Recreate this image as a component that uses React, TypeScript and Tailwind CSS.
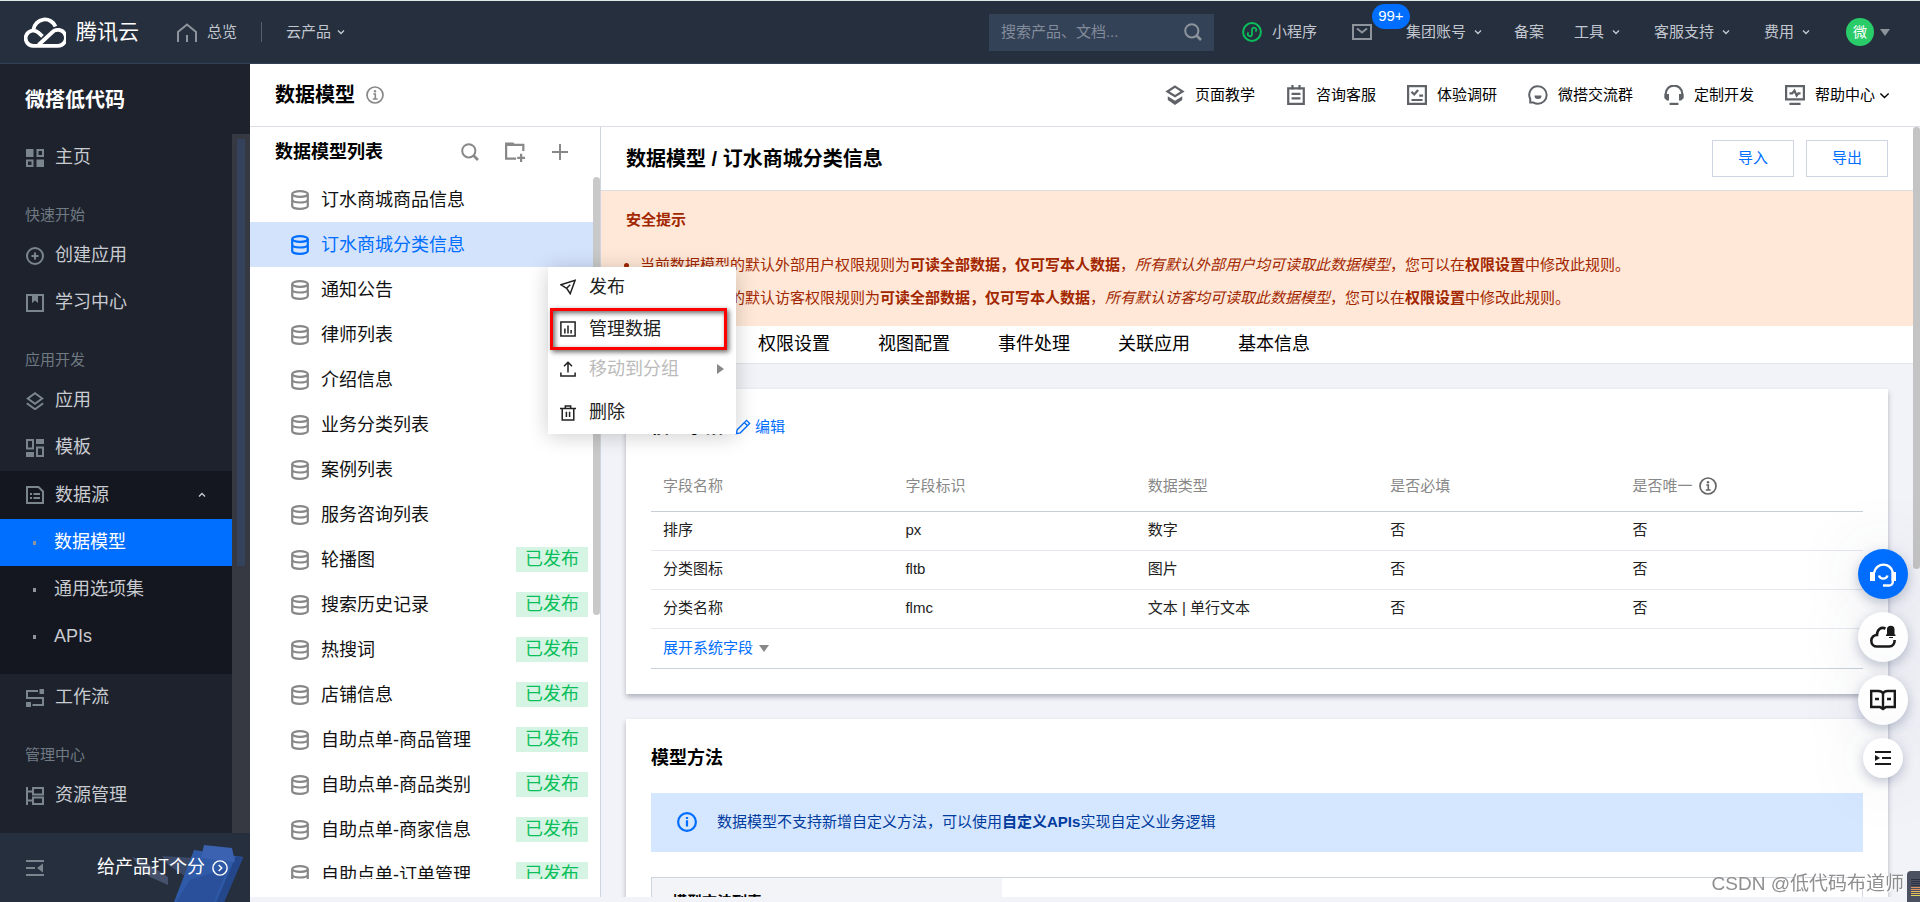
import type { ReactNode } from "react";
import clsx from "clsx";

const FONT = "font-['Liberation_Sans','Noto_Sans_CJK_SC',sans-serif]";

function Icon({ children, size = 18, className = "" }: { children: ReactNode; size?: number; className?: string }) {
  return (
    <svg
      width={size}
      height={size}
      viewBox="0 0 18 18"
      fill="none"
      stroke="currentColor"
      strokeWidth="2"
      className={clsx("shrink-0", className)}
      aria-hidden="true"
    >
      {children}
    </svg>
  );
}

const icons = {
  grid: (
    <>
      <path d="M0 0h7.500v8H0zM10.500 10.500H18V18h-7.500z" fill="currentColor" stroke="none" />
      <path d="M11.500 1H17v6h-5.500zM1 11.500h5.500V17H1z" />
    </>
  ),
  plusCircle: (
    <>
      <circle cx="9" cy="9" r="8" />
      <path d="M9 5.500v7M5.500 9h7" />
    </>
  ),
  book: (
    <>
      <path d="M1 1h16v16H1z" />
      <path d="M6 2h6v7L9 6.500 6 9z" fill="currentColor" stroke="none" />
    </>
  ),
  layers: (
    <>
      <path d="M9 1.200 16.200 6.500 9 11.800 1.800 6.500z" />
      <path d="m.8 11.200 8.200 6 8.200-6" />
    </>
  ),
  template: (
    <>
      <path d="M1 1h6v8.500H1zM11 8.500h6V17h-6z" />
      <path d="M0 13h8v5H0zM10 0h8v5h-8z" fill="currentColor" stroke="none" />
    </>
  ),
  source: (
    <>
      <path d="M1 1h11.500L17 5.500V17H1z" />
      <path d="M4 8h2M7.500 8H14M4 12h2M7.500 12H14" />
    </>
  ),
  flow: (
    <>
      <path d="M12 2H1v7h16v7H6.500" />
      <path d="M13.500 0H18v5h-4.500zM0 13h5v5H0z" fill="currentColor" stroke="none" />
    </>
  ),
  resource: (
    <>
      <path d="M1 0v18M1 4.500h5M1 13.500h5" />
      <path d="M7 1h10v6.500H7zM7 10.500h10V17H7z" />
    </>
  ),
  search: (
    <>
      <circle cx="7.800" cy="7.800" r="6.600" />
      <path d="m12.500 12.500 4.500 4.500" strokeWidth="2.600" />
    </>
  ),
  info: (
    <>
      <circle cx="9" cy="9" r="8" strokeWidth="1.700" />
      <path d="M7.300 8h2v5M6.800 13h4.800" strokeWidth="1.600" />
      <circle cx="9" cy="5.200" r="1.200" fill="currentColor" stroke="none" />
    </>
  ),
};

function DbIcon({ className = "" }: { className?: string }) {
  return (
    <svg width="18" height="20" viewBox="0 0 18 20" fill="none" stroke="currentColor" strokeWidth="2.200" className={clsx("shrink-0", className)} aria-hidden="true">
      <ellipse cx="9" cy="4" rx="7.800" ry="2.900" />
      <path d="M1.200 4v12c0 1.700 3.500 2.900 7.800 2.900s7.800-1.200 7.800-2.900V4M1.200 9.500c0 1.900 3.500 3 7.800 3s7.800-1.100 7.800-3" />
    </svg>
  );
}

function Chevron({ size = 8, up = false }: { size?: number; up?: boolean }) {
  return (
    <svg width={size} height={size} viewBox="0 0 8 8" fill="none" stroke="currentColor" strokeWidth={size > 8 ? 1 : 1.4} aria-hidden="true">
      <path d={up ? "M1 5.500 4 2.500l3 3" : "M1 2.500l3 3 3-3"} />
    </svg>
  );
}

function TopBar() {
  return (
    <header className="flex h-16 shrink-0 items-center border-t border-b border-t-[#dfe6e6] border-b-[#33405a] bg-[#262f3e] pl-6 pr-[30px] text-[15px] text-[#c2c7cf]">
      <a href="#" className="flex items-center gap-2.5 text-white">
        <svg width="42" height="31" viewBox="0 0 42 31" fill="none" stroke="#fff" strokeWidth="3.800" aria-hidden="true">
          <path d="M9.500 12.500A11.500 11.500 0 0 1 31.500 9.500" />
          <path d="M14.500 28 27.500 16a8 8 0 1 1 5.500 12.800H9.500a7.600 7.600 0 1 1 5.200-12.900l3.800 3.500" />
        </svg>
        <span className="text-[21px]">腾讯云</span>
      </a>
      <a href="#" className="ml-[38px] flex items-center gap-2.5">
        <svg width="20" height="19" viewBox="0 0 20 19" fill="none" stroke="#8d949c" strokeWidth="2" aria-hidden="true">
          <path d="M1 19V9l9-7.500L19 9v10M10 19v-7" />
        </svg>
        总览
      </a>
      <span className="mx-6 h-5 w-px bg-[#566070]" />
      <button className="flex items-center gap-1.5">
        云产品 <Chevron />
      </button>

      <div className="ml-auto flex items-center">
        <label className="mr-7 flex h-[37px] w-[225px] items-center justify-between bg-[#344258] pl-3 pr-3">
          <input type="text" placeholder="搜索产品、文档..." aria-label="搜索" className="w-40 bg-transparent outline-none placeholder:text-[#838c9a]" />
          <Icon className="text-[#8d949c]">{icons.search}</Icon>
        </label>
        <a href="#" className="mr-[35px] flex items-center gap-2.5">
          <Icon size={20} className="text-[#0abf5b]">
            <circle cx="9" cy="9" r="8" strokeWidth="1.800" />
            <path d="M5.900 9.400c-3 2.800 3.100 5.200 3.100 1.600V7c0-3.600 6.100-1.200 3.100 1.600" strokeWidth="1.600" />
          </Icon>
          小程序
        </a>
        <button className="relative mr-[34px]" aria-label="消息">
          <svg width="20" height="16" viewBox="0 0 20 16" fill="none" stroke="#8d949c" strokeWidth="2" aria-hidden="true">
            <path d="M1 1h18v14H1zM5 4.500l5 4 5-4" />
          </svg>
          <span className="absolute -top-5 left-5 flex h-[25px] w-[38px] items-center justify-center rounded-full bg-[#006eff] text-[15px] text-white">99+</span>
        </button>
        <button className="mr-8 flex items-center gap-2">
          集团账号 <Chevron />
        </button>
        <button className="mr-[30px]">备案</button>
        <button className="mr-[34px] flex items-center gap-2">
          工具 <Chevron />
        </button>
        <button className="mr-[34px] flex items-center gap-2">
          客服支持 <Chevron />
        </button>
        <button className="mr-9 flex items-center gap-2">
          费用 <Chevron />
        </button>
        <button className="flex items-center gap-1.5">
          <span className="flex size-7 items-center justify-center rounded-full bg-[#29cc68] text-sm text-white">微</span>
          <svg width="10" height="7" viewBox="0 0 10 7" aria-hidden="true">
            <path d="M0 0h10L5 7z" fill="#8d949c" />
          </svg>
        </button>
      </div>
    </header>
  );
}

function NavItem({ icon, label }: { icon: ReactNode; label: string }) {
  return (
    <a href="#" className="flex h-[47px] items-center gap-[11px] pl-[26px] text-[18px] text-[#c8cbd0]">
      <Icon className="text-[#7b858e]">{icon}</Icon>
      {label}
    </a>
  );
}

function NavLabel({ children }: { children: ReactNode }) {
  return <div className="h-[51px] pt-[22px] pl-[25px] text-[15px] leading-6 text-[#6f7a83]">{children}</div>;
}

function SubItem({ label, active = false }: { label: string; active?: boolean }) {
  return (
    <a
      href="#"
      className={clsx("flex h-[47px] items-center gap-[18px] pl-[33px] text-[18px]", active ? "bg-[#006eff] text-white" : "text-[#c8cbd0]")}
    >
      <span className="h-1 w-[3px] bg-[#8d949c]" />
      {label}
    </a>
  );
}

function Sidebar() {
  return (
    <nav className="flex w-[250px] shrink-0 flex-col overflow-hidden bg-[#1e222d]">
      <h1 className="h-[70px] shrink-0 pt-[22px] pl-[25px] text-[20px] font-bold leading-7 text-white">微搭低代码</h1>
      <div className="flex min-h-0 flex-1">
        <div className="min-w-0 flex-1 overflow-hidden">
          <NavItem icon={icons.grid} label="主页" />
          <NavLabel>快速开始</NavLabel>
          <NavItem icon={icons.plusCircle} label="创建应用" />
          <NavItem icon={icons.book} label="学习中心" />
          <NavLabel>应用开发</NavLabel>
          <NavItem icon={icons.layers} label="应用" />
          <NavItem icon={icons.template} label="模板" />
          <div className="bg-[#151720] pb-3.5">
            <div className="flex h-12 items-center justify-between pr-[26px] text-[#c8cbd0]">
              <NavItem icon={icons.source} label="数据源" />
              <Chevron up />
            </div>
            <SubItem label="数据模型" active />
            <SubItem label="通用选项集" />
            <SubItem label="APIs" />
          </div>
          <NavItem icon={icons.flow} label="工作流" />
          <NavLabel>管理中心</NavLabel>
          <NavItem icon={icons.resource} label="资源管理" />
          <NavItem icon={<path d="M0 1h18v16H0z" />} label="" />
        </div>
        <div className="w-[18px] bg-[#363941] py-[5px] pl-[5px]">
          <div className="h-[427px] w-2 bg-[#35425c]" />
        </div>
      </div>
      <div className="relative flex h-[69px] shrink-0 items-center justify-between bg-[#262f3e] pl-[26px] pr-[22px]">
        <svg width="120" height="58" viewBox="0 0 120 58" className="absolute right-0 bottom-0" aria-hidden="true">
          <path d="M2 13l10 3 26 17v8L20 33z" fill="#46526b" />
          <path d="M32 12l34 2-8 20-20-13z" fill="#3c4a69" />
          <path d="M64 6l49 7-19 45H44z" fill="#2f5aa8" />
          <path d="M106 12l7 2-19 44h-8z" fill="#24478c" />
          <path d="M60 36l38-12-14 34H46z" fill="#2a509b" />
          <path d="M74 1l28 3 3 14-34-4z" fill="#3b62b0" />
        </svg>
        <button aria-label="收起" className="text-[#7b858e]">
          <Icon>
            <path d="M0 2h18M0 9h9M0 16h18" />
            <path d="M17 4.500v9L11 9z" fill="currentColor" stroke="none" />
          </Icon>
        </button>
        <button className="relative flex items-center gap-[7px] text-[18px] text-white">
          给产品打个分
          <Icon size={16}>
            <circle cx="9" cy="9" r="8" strokeWidth="1.600" />
            <path d="M7.500 5.500 11 9l-3.500 3.500" strokeWidth="1.600" />
          </Icon>
        </button>
      </div>
    </nav>
  );
}

const helpLinks = [
  {
    label: "页面教学",
    icon: (
      <>
        <path d="M9 1.500 15.800 5.800 9 10.100 2.200 5.800z" />
        <path d="M2.500 10.200 9 14.200l6.500-4v3.300L9 18l-6.500-4.500z" fill="currentColor" stroke="none" />
      </>
    ),
  },
  {
    label: "咨询客服",
    icon: (
      <>
        <path d="M2 3h14v14H2z" />
        <path d="M5.800 0v4M12.200 0v4M5 8h8M5 12h8" />
      </>
    ),
  },
  {
    label: "体验调研",
    icon: (
      <>
        <path d="M1 1h16v16H1zM4 13.500h10" />
        <path d="m4 6 2.500 2.500L10 4.500M11 9.500h3.500" />
      </>
    ),
  },
  {
    label: "微搭交流群",
    icon: (
      <>
        <path d="M9 1.200a7.600 7.600 0 1 1 0 15.600c-2 0-3-.4-4-1H2v-3.500A7.600 7.600 0 0 1 9 1.200z" strokeWidth="1.800" />
        <path d="M5.800 9.500h6.400a3.200 3.200 0 0 1-6.400 0z" fill="currentColor" stroke="none" />
      </>
    ),
  },
  {
    label: "定制开发",
    icon: (
      <>
        <path d="M1.500 12V8a7.500 7.500 0 0 1 15 0v4" />
        <path d="M.5 8h4v6h-2l-2-2zM17.500 8h-4v6h2l2-2z" fill="currentColor" stroke="none" />
        <path d="M5 17h8" />
      </>
    ),
  },
  {
    label: "帮助中心",
    icon: (
      <>
        <path d="M1 1h16v12H1zM4 17h10" />
        <path d="M4 7.500h2.500l2-2.500 2 4.500 1.500-2h2" />
      </>
    ),
  },
];

function PageHeader() {
  return (
    <div className="flex h-[63px] shrink-0 items-center border-b border-[#dcdfe3] bg-white pl-[25px] pr-[30px]">
      <h2 className="text-[20px] font-bold">数据模型</h2>
      <button aria-label="说明" className="ml-[11px] text-[#888]">
        <Icon>{icons.info}</Icon>
      </button>
      <div className="ml-auto flex items-center gap-[31px] text-[15px]">
        {helpLinks.map((link, i) => (
          <a key={link.label} href="#" className="flex items-center gap-2.5">
            <Icon size={20} className="text-[#5f6368]">
              {link.icon}
            </Icon>
            <span className="flex items-center gap-1">
              {link.label}
              {i === helpLinks.length - 1 && <Chevron size={11} />}
            </span>
          </a>
        ))}
      </div>
    </div>
  );
}

const models = [
  { name: "订水商城商品信息" },
  { name: "订水商城分类信息", active: true },
  { name: "通知公告" },
  { name: "律师列表" },
  { name: "介绍信息" },
  { name: "业务分类列表" },
  { name: "案例列表" },
  { name: "服务咨询列表" },
  { name: "轮播图", published: true },
  { name: "搜索历史记录", published: true },
  { name: "热搜词", published: true },
  { name: "店铺信息", published: true },
  { name: "自助点单-商品管理", published: true },
  { name: "自助点单-商品类别", published: true },
  { name: "自助点单-商家信息", published: true },
  { name: "自助点单-订单管理", published: true },
];

function ContextMenu() {
  const item = "flex w-full items-center gap-[13px] pl-3 text-left text-[18px]";
  return (
    <div className="absolute top-[140px] left-[298px] z-20 w-[188px] bg-white text-[#222] shadow-[0_2px_20px_rgba(0,0,0,0.2)]">
      <button className={clsx(item, "h-10")}>
        <Icon size={16}>
          <path d="M1 6.500 17 1.500 11.500 16.500 7.500 10.500zM7.500 10.500l4-4" strokeWidth="1.700" />
        </Icon>
        发布
      </button>
      <div className="relative">
        <button className={clsx(item, "h-11")}>
          <Icon size={16}>
            <path d="M1 1h16v16H1zM5.500 8.500V14M9 5v9M12.500 10v4" strokeWidth="1.700" />
          </Icon>
          管理数据
        </button>
        <span className="pointer-events-none absolute inset-x-0.5 inset-y-px mr-[7px] border-3 border-[#f00] shadow-[2px_2px_5px_rgba(0,0,0,0.6),inset_2px_2px_5px_rgba(0,0,0,0.6)]" />
      </div>
      <button className={clsx(item, "h-9 text-[#bbb]")} disabled>
        <Icon size={16} className="text-[#222]">
          <path d="M9 13V1.500M4.500 6 9 1.500 13.500 6M1 13v4h16v-4" strokeWidth="1.700" />
        </Icon>
        移动到分组
        <svg width="7" height="10" viewBox="0 0 7 10" className="ml-auto mr-3" aria-hidden="true">
          <path d="M0 0v10l7-5z" fill="#888" />
        </svg>
      </button>
      <button className={clsx(item, "h-[47px] pt-1")}>
        <Icon size={16}>
          <path d="M0 4h18M2.500 4v13h13V4M6 4V1h6v3M7.200 7.500v6M10.800 7.500v6" strokeWidth="1.700" />
        </Icon>
        删除
      </button>
    </div>
  );
}

function ModelList() {
  return (
    <aside className="relative mb-[5px] flex w-[351px] shrink-0 flex-col border-r border-[#cfd5de] bg-white pb-[18px]">
      <div className="flex h-[50px] shrink-0 items-center pl-[25px] pr-[31px] text-[#888]">
        <h3 className="mr-auto text-[18px] font-bold text-black">数据模型列表</h3>
        <button aria-label="搜索模型">
          <Icon>{icons.search}</Icon>
        </button>
        <button aria-label="新建分组" className="ml-[26px]">
          <Icon size={20}>
            <path d="M10 15H1V2.500h15.500V8" />
            <path d="M0 .5h7.500l2 2.500H0z" fill="currentColor" stroke="none" />
            <path d="M14.500 10.500V18M11 14.200h7" />
          </Icon>
        </button>
        <button aria-label="新建模型" className="ml-[26px]">
          <Icon>
            <path d="M9 1v16M1 9h16" />
          </Icon>
        </button>
      </div>
      <div className="flex min-h-0 flex-1">
        <ul className="min-w-0 flex-1 overflow-hidden text-[18px]">
          {models.map((m) => (
            <li key={m.name}>
              <a
                href="#"
                className={clsx("flex h-[45px] items-center pl-[41px] pr-[5px]", m.active ? "bg-[#d4e3fc] text-[#006eff]" : "text-[#111]")}
              >
                <DbIcon className={clsx("mr-3", !m.active && "text-[#888]")} />
                <span className="leading-6">{m.name}</span>
                {m.published && (
                  <span className="ml-auto flex h-[25px] w-[72px] items-center justify-center bg-[#d6f4e3] text-[#0abf5b]">已发布</span>
                )}
              </a>
            </li>
          ))}
        </ul>
        <div className="w-[7px]">
          <div className="h-[438px] rounded-full bg-[#c9c9c9]" />
        </div>
      </div>
      <ContextMenu />
    </aside>
  );
}

const fields = [
  ["排序", "px", "数字", "否", "否"],
  ["分类图标", "fltb", "图片", "否", "否"],
  ["分类名称", "flmc", "文本 | 单行文本", "否", "否"],
];

function FieldsCard() {
  return (
    <section className="mx-[25px] mt-[25px] bg-white px-[25px] pt-[25px] pb-[25px] shadow-[0_3px_5px_rgba(54,58,80,0.35)]">
      <div className="flex h-[26px] items-center">
        <h3 className="text-[18px] font-bold">模型字段</h3>
        <button className="ml-3 flex items-center gap-1 text-[15px] text-[#006eff]">
          <Icon size={16}>
            <path d="M1.500 16.500l1-4.500L13 1.500l3.500 3.500L6 15.500zM10.500 4l3.500 3.500" strokeWidth="1.500" />
          </Icon>
          编辑
        </button>
      </div>
      <table className="mt-[22px] w-full table-fixed text-left text-[15px] text-[#222]">
        <thead>
          <tr className="h-[49px] border-b border-[#c9cfd9] text-[#888]">
            <th className="px-3 font-normal">字段名称</th>
            <th className="px-3 font-normal">字段标识</th>
            <th className="px-3 font-normal">数据类型</th>
            <th className="px-3 font-normal">是否必填</th>
            <th className="px-3 font-normal">
              <span className="flex items-center gap-1.5">
                是否唯一 <Icon className="text-[#666]">{icons.info}</Icon>
              </span>
            </th>
          </tr>
        </thead>
        <tbody>
          {fields.map((row) => (
            <tr key={row[1]} className="h-[39px] border-b border-[#e5e8ed]">
              {row.map((cell, i) => (
                <td key={i} className="px-3">
                  {cell}
                </td>
              ))}
            </tr>
          ))}
          <tr className="h-10 border-b border-[#c9d1de]">
            <td colSpan={5} className="px-3">
              <button className="flex items-center gap-1.5 text-[#006eff]">
                展开系统字段
                <svg width="10" height="7" viewBox="0 0 10 7" aria-hidden="true">
                  <path d="M0 0h10L5 7z" fill="#888" />
                </svg>
              </button>
            </td>
          </tr>
        </tbody>
      </table>
    </section>
  );
}

function MethodsCard() {
  return (
    <section className="mx-[25px] mt-[25px] bg-white px-[25px] pt-[26px] shadow-[0_3px_5px_rgba(54,58,80,0.35)]">
      <h3 className="text-[18px] font-bold leading-[26px]">模型方法</h3>
      <div className="mt-[22px] flex h-[59px] items-center gap-5 bg-[#d5e6ff] pl-[26px] text-[15px] text-[#003b9e]">
        <Icon size={20} className="text-[#006eff]">
          <circle cx="9" cy="9" r="8" />
          <path d="M9 7.500V13M9 4.500v1.800" />
        </Icon>
        <p>
          数据模型不支持新增自定义方法，可以使用<b>自定义APIs</b>实现自定义业务逻辑
        </p>
      </div>
      <div className="mt-[25px] h-40 border border-[#cfd5de]">
        <div className="h-full w-[350px] bg-[#f3f4f7] pt-3 pl-5 text-[15px] font-bold leading-6">模型方法列表</div>
      </div>
    </section>
  );
}

function Detail() {
  return (
    <main className="flex min-w-0 flex-1">
      <div className="mb-[5px] min-w-0 flex-1 overflow-hidden">
        <div className="flex h-16 items-center justify-between border-b border-[#d9dce1] bg-white pl-[25px] pr-[25px]">
          <h2 className="text-[20px] font-bold">数据模型 / 订水商城分类信息</h2>
          <div className="flex gap-3 text-[15px] text-[#006eff]">
            <button className="h-[37px] w-[82px] border border-[#cfd5e2]">导入</button>
            <button className="h-[37px] w-[82px] border border-[#cfd5e2]">导出</button>
          </div>
        </div>
        <div className="h-[135px] bg-[#ffe8d7] pt-[17px] pl-[25px] text-[15px] text-[#a22600]">
          <h4 className="font-bold leading-6">安全提示</h4>
          <ul className="mt-4 list-disc pl-[14px] leading-[33px]">
            <li>
              当前数据模型的默认外部用户权限规则为<b>可读全部数据，仅可写本人数据</b>，<i>所有默认外部用户均可读取此数据模型</i>，您可以在<b>权限设置</b>中修改此规则。
            </li>
            <li>
              当前数据模型的默认访客权限规则为<b>可读全部数据，仅可写本人数据</b>，<i>所有默认访客均可读取此数据模型</i>，您可以在<b>权限设置</b>中修改此规则。
            </li>
          </ul>
        </div>
        <div className="flex h-[38px] items-center gap-12 border-b border-[#e2e4ea] bg-white pl-[157px] text-[18px]">
          <button>权限设置</button>
          <button>视图配置</button>
          <button>事件处理</button>
          <button>关联应用</button>
          <button>基本信息</button>
        </div>
        <FieldsCard />
        <MethodsCard />
      </div>
      <div className="w-[7px]">
        <div className="h-[442px] rounded-full bg-[#c4c4c4]" />
      </div>
    </main>
  );
}

function FloatButtons() {
  const round = "flex items-center justify-center rounded-full shadow-[0_4px_12px_rgba(54,72,110,0.3),0_0_70px_rgba(54,72,110,0.14)]";
  return (
    <div className="fixed right-3 bottom-[124px] z-10 flex flex-col items-center gap-[13px] text-[#1a1a1a]">
      <button aria-label="在线客服" className={clsx(round, "size-[50px] bg-[#006eff] text-white")}>
        <svg width="26" height="26" viewBox="0 0 26 26" fill="none" stroke="currentColor" strokeWidth="2.400" aria-hidden="true">
          <path d="M4.200 12v-.800a9.500 9.500 0 0 1 18.600 0V21a3.500 3.500 0 0 1-3.500 3.500H13M9 14.500c1.200 4.200 7.300 4.200 8.500 0" />
          <path d="M0 11h5v9H0zM21.500 11H26v9h-4.500z" fill="currentColor" stroke="none" />
        </svg>
      </button>
      <button aria-label="云通知" className={clsx(round, "size-[50px] bg-white")}>
        <svg width="26" height="24" viewBox="0 0 26 24" fill="none" stroke="currentColor" strokeWidth="2.600" aria-hidden="true">
          <path d="M15.500 3.500C11 1.500 7 4.500 7 10c-3 0-5.700 2-5.700 5.700S4 21.500 7 21.500h12c3.600 0 5.800-2.500 5.600-6.500" />
          <path d="M16 10l1-1V4.500a3.700 3.700 0 0 1 7.500 0V9l1 1v1H16zM19 12h4v1h-4z" fill="currentColor" stroke="none" />
        </svg>
      </button>
      <button aria-label="文档" className={clsx(round, "size-[50px] bg-white")}>
        <svg width="26" height="22" viewBox="0 0 26 22" fill="none" stroke="currentColor" strokeWidth="2.400" aria-hidden="true">
          <path d="M13 4.500C12 2.500 10.500 2 8.500 2H1.200v16H10l3 2 3-2h8.800V2h-7.300c-2 0-3.500.5-4.500 2.500zM13 4v16M5 10h4M17 10h4" />
        </svg>
      </button>
      <button aria-label="展开" className={clsx(round, "size-10 bg-white")}>
        <svg width="16" height="14" viewBox="0 0 16 14" fill="none" stroke="currentColor" strokeWidth="2" aria-hidden="true">
          <path d="M0 1h16M7 7h9M0 13h16" />
          <path d="M0 4v6l5-3z" fill="currentColor" stroke="none" />
        </svg>
      </button>
    </div>
  );
}

export default function App() {
  return (
    <div className={clsx("flex h-screen flex-col overflow-hidden bg-[#f2f3f8] text-black", FONT)}>
      <TopBar />
      <div className="flex min-h-0 flex-1">
        <Sidebar />
        <div className="flex min-w-0 flex-1 flex-col">
          <PageHeader />
          <div className="flex min-h-0 flex-1">
            <ModelList />
            <Detail />
          </div>
        </div>
      </div>
      <FloatButtons />
      <div className="fixed right-4 bottom-1 z-10 text-[19px] text-[#8f8f8f] [text-shadow:1px_1px_0_#fff]">CSDN @低代码布道师</div>
      <div className="fixed right-0 bottom-0 z-10 flex h-[31px] w-[13px] flex-col gap-px rounded-tl bg-[#4c5162] pt-2 pl-1">
        <span className="h-px bg-[#2d3040]" />
        <span className="h-px bg-[#2d3040]" />
        <span className="h-px bg-[#2d3040]" />
        <span className="h-px bg-[#2d3040]" />
        <span className="h-px bg-[#e0905a]" />
        <span className="h-px bg-[#e0905a]" />
        <span className="h-px bg-[#e0b85a]" />
        <span className="h-px bg-[#e0b85a]" />
        <span className="h-px bg-[#e0d65a]" />
      </div>
    </div>
  );
}
